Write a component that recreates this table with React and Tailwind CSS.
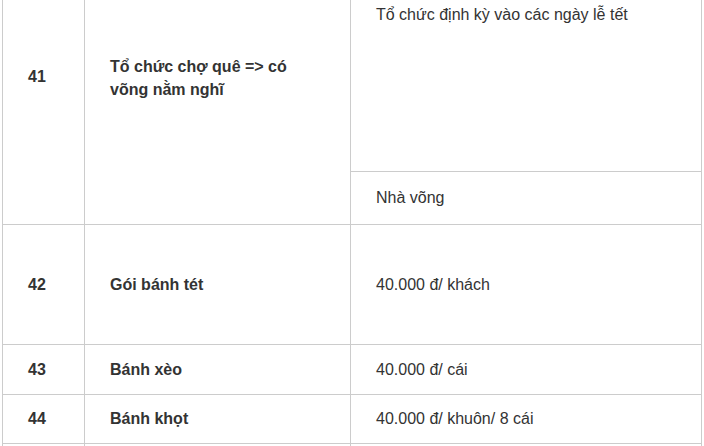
const rows = [
  { no: "42", name: "Gói bánh tét", price: "40.000 đ/ khách", h: "h-[120px]" },
  { no: "43", name: "Bánh xèo", price: "40.000 đ/ cái", h: "h-[50px]" },
  { no: "44", name: "Bánh khọt", price: "40.000 đ/ khuôn/ 8 cái", h: "h-[49px]" },
];

export default function App() {
  return (
    <div className="h-[446px] w-[704px] overflow-hidden bg-white font-['Liberation_Sans',Arial,sans-serif] text-[16px] text-[#333]">
      <div className="ml-[2px] w-[700px] border-x border-[#cccccc]">
        {/* Row 41 */}
        <div className="grid h-[225px] grid-cols-[82px_266px_350px] border-b border-[#cccccc]">
          <div className="border-r border-[#cccccc] pl-[25px] pt-[65px] font-bold leading-6">41</div>
          <div className="border-r border-[#cccccc] pl-[25px] pr-4 pt-[55px] font-bold leading-[23px]">
            Tổ chức chợ quê =&gt; có
            <br />
            võng nằm nghĩ
          </div>
          <div className="flex flex-col">
            <div className="h-[172px] border-b border-[#cccccc] pl-[25px] pt-[3px] leading-6">
              Tổ chức định kỳ vào các ngày lễ tết
            </div>
            <div className="flex flex-1 items-center pl-[25px] leading-6">Nhà võng</div>
          </div>
        </div>

        {rows.map((r) => (
          <div key={r.no} className={`grid grid-cols-[82px_266px_350px] border-b border-[#cccccc] ${r.h}`}>
            <div className="flex items-center border-r border-[#cccccc] pl-[25px] font-bold leading-6">{r.no}</div>
            <div className="flex items-center border-r border-[#cccccc] pl-[25px] font-bold leading-6">{r.name}</div>
            <div className="flex items-center pl-[25px] leading-6">{r.price}</div>
          </div>
        ))}

        <div className="grid h-[60px] grid-cols-[82px_266px_350px]">
          <div className="border-r border-[#cccccc]" />
          <div className="border-r border-[#cccccc]" />
          <div />
        </div>
      </div>
    </div>
  );
}
